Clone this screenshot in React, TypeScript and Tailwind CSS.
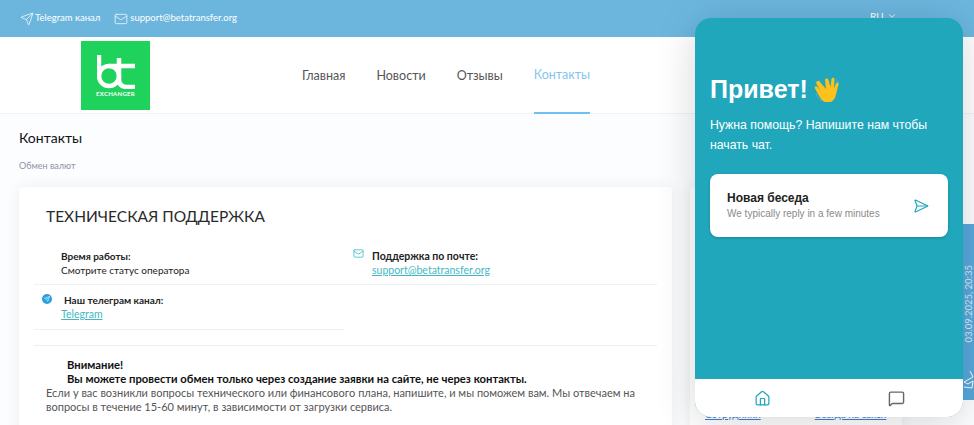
import { Send, Mail, ChevronDown, Home, MessageSquare, SendHorizontal } from "lucide-react";

const nav = [
  { label: "Главная", active: false },
  { label: "Новости", active: false },
  { label: "Отзывы", active: false },
  { label: "Контакты", active: true },
];

const Logo = () => (
  <div className="w-[69px] h-[69px] bg-[#1ed25c] flex flex-col items-center justify-center">
    <svg width="38" height="34" viewBox="0 0 38 34" fill="none" stroke="#fff" strokeWidth="4.500">
      <path d="M2 0v22" />
      <circle cx="12" cy="21" r="10" />
      <path d="M22 3v21q0 8 8 8h8M12 11h26" />
    </svg>
    <span className="text-[6px] leading-[6px] font-bold text-white tracking-[0.3px] mt-[2px]">EXCHANGER</span>
  </div>
);

const Wave = () => (
  <svg width="26" height="26" viewBox="0 0 26 26">
    <path d="M2 17c1 4 3 6 6 8M22 3c1 1 2 2 2.500 4" stroke="#5aa9d6" strokeWidth="1" fill="none" />
    <path d="M6 6l6 7-1-9c0-2 3-2 3.500 0l2 7 1-8c.5-2 3-1.500 3 .5l-.5 9 2-5c1-2 3-1 2.500 1l-2.500 10c-1 5-4 8-8 8-4 0-6-2-8-5l-5-9c-1-2 1-3 2.500-1.500l3 4-4.500-8C2.500 5 5 3.500 6 6z" fill="#fcc21b" />
  </svg>
);

const App = () => {
  return (
    <div className="relative w-[974px] h-[425px] overflow-hidden bg-[#fcfdfe] font-['Lato','Noto_Sans',sans-serif]">
      <header className="h-[37px] bg-[#6cb6de] flex items-center pl-[20px] text-white text-[9.500px] gap-[15px]">
        <div className="flex items-center gap-[1px]">
          <Send className="w-[14px] h-[14px]" strokeWidth={1.25} />
          Telegram канал
        </div>
        <div className="flex items-center gap-[2px] -ml-[1px]">
          <Mail className="w-[14px] h-[14px]" strokeWidth={1.25} />
          support@betatransfer.org
        </div>
        <div className="flex items-center gap-[3px] ml-[618px] -mt-[5px] text-[10px]">
          RU <ChevronDown className="w-[10px] h-[10px]" />
        </div>
      </header>

      <div className="h-[77px] bg-white border-b border-[#eef3f9] flex pl-[81px] pt-[4px]">
        <Logo />
        <nav className="flex gap-[31px] ml-[152px] -mt-[4px] text-[12.500px] text-[#555]">
          {nav.map((n) => (
            <a
              key={n.label}
              className={n.active ? "h-[77px] pt-[2px] flex items-center text-[#84c5f0] border-b-2 border-[#6fc0ee]" : "h-[77px] pt-[2px] flex items-center"}
            >
              {n.label}
            </a>
          ))}
        </nav>
      </div>

      <main className="pl-[19px] pt-[14px]">
        <h1 className="text-[14px] leading-[20px] text-[#111]">Контакты</h1>
        <p className="text-[9px] leading-[12px] text-[#8c93a8] mt-[12px]">Обмен валют</p>

        <div className="flex gap-[18px] mt-[15px]">
          <section className="w-[653px] h-[260px] shrink-0 bg-white rounded-[4px] shadow-[0_0_14px_rgba(40,60,100,0.08)] pt-[19px] px-[15px]">
            <h2 className="text-[15.500px] leading-[20px] text-[#2a2a2a] pl-[12px]">ТЕХНИЧЕСКАЯ ПОДДЕРЖКА</h2>

            <div className="flex border-b border-[#eef1f7] mt-[23px] text-[10px] leading-[14px] h-[36px]">
              <div className="w-[319px] pl-[27px] text-[#222]">
                <p className="font-bold">Время работы:</p>
                <p>Смотрите статус оператора</p>
              </div>
              <Mail className="w-[11px] h-[11px] text-[#4fc6cf] -mt-[1px]" strokeWidth={2} />
              <div className="pl-[8px] text-[#222] text-[10.500px]">
                <p className="font-bold">Поддержка по почте:</p>
                <a className="text-[#3fb8c4] underline">support@betatransfer.org</a>
              </div>
            </div>

            <div className="w-[311px] h-[45px] border-b border-[#eef1f7] flex pt-[8px] text-[10px] leading-[14px]">
              <div className="w-[10px] h-[10px] rounded-full bg-[#2a9fe0] flex items-center justify-center ml-[8px] mt-[1px]">
                <Send className="w-[6px] h-[6px] text-white" />
              </div>
              <div className="pl-[12px] text-[#222]">
                <p className="font-bold">Наш телеграм канал:</p>
                <a className="text-[#3fb8c4] underline -ml-[3px] text-[10.500px]">Telegram</a>
              </div>
            </div>

            <div className="border-t border-[#eeeeee] mt-[15px] pt-[12px] pl-[12px] pr-[20px] text-[11px] leading-[14px]">
              <p className="font-bold text-[#111] pl-[21px] text-[11.250px]">Внимание!</p>
              <p className="font-bold text-[#111] pl-[21px] text-[11.250px]">Вы можете провести обмен только через создание заявки на сайте, не через контакты.</p>
              <p className="text-[#555]">
                Если у вас возникли вопросы технического или финансового плана, напишите, и мы поможем вам. Мы отвечаем на вопросы в течение 15-60 минут, в зависимости от загрузки сервиса.
              </p>
            </div>
          </section>

          <aside className="w-[212px] h-[260px] shrink-0 bg-white rounded-[4px] shadow-[0_0_14px_rgba(40,60,100,0.08)] pt-[220px] pl-[15px] flex gap-[54px] text-[10px] leading-[14px] text-[#3f7fd8] underline">
            <span>Сотрудники</span>
            <span>Всегда на связи</span>
          </aside>
        </div>
      </main>

      {/* side tab */}
      <div className="absolute right-0 top-[224px] w-[11px] h-[176px] bg-[#57a8dc] flex flex-col items-center justify-end pb-[11px] overflow-hidden">
        <span className="[writing-mode:vertical-rl] rotate-180 text-[9.500px] leading-[11px] text-[#d5ecf8] whitespace-nowrap mb-[28px]">03.09.2025, 20:35</span>
        <svg width="10" height="18" viewBox="0 0 10 18" fill="none" stroke="#fff" strokeWidth="1" className="shrink-0">
          <path d="M6 0l3 6-9 5 4 2 5-3-1 7-8-1" />
        </svg>
      </div>

      {/* chat widget */}
      <div className="absolute left-[695px] top-[18px] w-[268px] h-[399px] rounded-[16px] overflow-hidden flex flex-col bg-[#20a7bc] shadow-[0_5px_40px_rgba(0,0,0,0.16)] font-['Liberation_Sans',sans-serif]">
        <div className="flex-1 px-[15px] pt-[55px]">
          <div className="flex items-center gap-[6px] h-[32px]">
            <h3 className="text-[25px] leading-[32px] font-bold text-white">Привет!</h3>
            <Wave />
          </div>
          <p className="text-[12.250px] leading-[20px] text-white mt-[10px]">Нужна помощь? Напишите нам чтобы начать чат.</p>
          <div className="mt-[19px] h-[63px] bg-white rounded-[8px] shadow-[0_1px_3px_rgba(0,0,0,0.2)] flex items-center justify-between pl-[17px] pr-[19px]">
            <div>
              <p className="text-[12px] leading-[16px] font-bold text-[#222]">Новая беседа</p>
              <p className="text-[10px] leading-[15px] text-[#8a8a8a]">We typically reply in a few minutes</p>
            </div>
            <SendHorizontal className="w-[16px] h-[16px] text-[#20a7bc]" strokeWidth={1.75} />
          </div>
        </div>
        <div className="h-[38px] bg-white flex items-center justify-around">
          <Home className="w-[17px] h-[17px] text-[#20a7bc]" strokeWidth={1.75} />
          <MessageSquare className="w-[17px] h-[17px] text-[#666]" strokeWidth={2} />
        </div>
      </div>
    </div>
  );
};

export default App;
